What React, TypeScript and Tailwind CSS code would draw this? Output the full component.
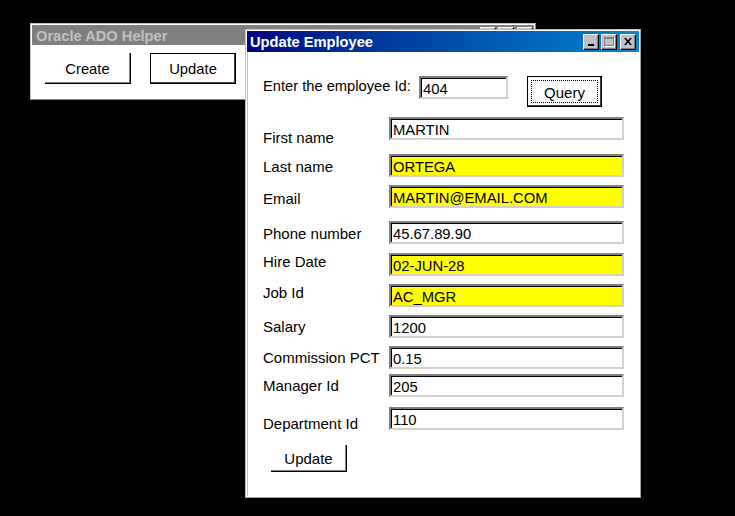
import React from "react";

type Row = {
  label: string;
  value: string;
  yellow: boolean;
  rowMt: string;
  labelMt: string;
};

const rows: Row[] = [
  { label: "First name", value: "MARTIN", yellow: false, rowMt: "mt-[10px]", labelMt: "mt-[12px]" },
  { label: "Last name", value: "ORTEGA", yellow: true, rowMt: "mt-[14px]", labelMt: "mt-[4px]" },
  { label: "Email", value: "MARTIN@EMAIL.COM", yellow: true, rowMt: "mt-[8px]", labelMt: "mt-[5px]" },
  { label: "Phone number", value: "45.67.89.90", yellow: false, rowMt: "mt-[13px]", labelMt: "mt-[4px]" },
  { label: "Hire Date", value: "02-JUN-28", yellow: true, rowMt: "mt-[9px]", labelMt: "mt-[0px]" },
  { label: "Job Id", value: "AC_MGR", yellow: true, rowMt: "mt-[8px]", labelMt: "mt-[0px]" },
  { label: "Salary", value: "1200", yellow: false, rowMt: "mt-[8px]", labelMt: "mt-[3px]" },
  { label: "Commission PCT", value: "0.15", yellow: false, rowMt: "mt-[8px]", labelMt: "mt-[3px]" },
  { label: "Manager Id", value: "205", yellow: false, rowMt: "mt-[5px]", labelMt: "mt-[3px]" },
  { label: "Department Id", value: "110", yellow: false, rowMt: "mt-[10px]", labelMt: "mt-[8px]" },
];

function TitleButtons() {
  const base =
    "w-[16px] h-[16px] bg-[#c0c0c0] border border-t-white border-l-white border-b-black border-r-black shadow-[inset_-1px_-1px_0_#808080] flex";
  return (
    <div className="flex items-center">
      <div className={base + " items-end justify-center pb-[3px]"}>
        <div className="w-[6px] h-[2px] bg-black mr-[1px]" />
      </div>
      <div className={base + " items-center justify-center ml-[2px]"}>
        <div className="w-[10px] h-[9px] border border-[#808080] border-t-2 shadow-[1px_1px_0_#ffffff]" />
      </div>
      <div className={base + " items-center justify-center ml-[3px]"}>
        <svg width="8" height="7" viewBox="0 0 8 7">
          <path d="M0 0h2l2 2.2L6 0h2L5.1 3.5 8 7H6L4 4.8 2 7H0l2.9-3.5z" fill="black" />
        </svg>
      </div>
    </div>
  );
}

function Field({ value, yellow, w }: { value: string; yellow: boolean; w: string }) {
  return (
    <div
      className={
        (yellow ? "bg-[#ffff00] " : "bg-white ") +
        w +
        " h-[23px] border-2 border-t-[#808080] border-l-[#808080] border-b-[#d4d0c8] border-r-[#d4d0c8] shadow-[inset_1px_1px_0_#000000] pl-[2px] pt-[2px] text-[14.8px] leading-[18px] text-black whitespace-nowrap overflow-hidden"
      }
    >
      {value}
    </div>
  );
}

export default function App() {
  return (
    <div className="relative w-[735px] h-[516px] bg-black overflow-hidden font-['Liberation_Sans',Arial,sans-serif]">
      {/* Background window */}
      <div className="absolute left-[30px] top-[23px] w-[506px] h-[77px] bg-white border border-[#c0c0c0] border-b-[#808080] border-r-[#808080] p-[1px] flex flex-col">
        <div className="h-[20px] bg-[#808080] flex items-center justify-between pl-[4px] pr-[1px]">
          <span className="text-[14.67px] font-bold text-[#c0c0c0] leading-none pt-[2px]">Oracle ADO Helper</span>
          <TitleButtons />
        </div>
        <div className="flex pl-[13px] pt-[8px] gap-[19px]">
          <div className="w-[86px] h-[31px] bg-white border-b border-r border-black shadow-[inset_-1px_-1px_0_#808080] flex items-center justify-center pt-[2px] text-[14.8px] text-black">
            Create
          </div>
          <div className="w-[86px] h-[31px] bg-white border border-black shadow-[inset_-1px_-1px_0_#404040] flex items-center justify-center pt-[2px] text-[14.8px] text-black">
            Update
          </div>
        </div>
      </div>

      {/* Update Employee window */}
      <div className="absolute left-[245px] top-[29px] w-[396px] h-[469px] bg-white border border-[#c0c0c0] border-b-[#a0a0a0] border-r-[#a0a0a0] p-[1px] flex flex-col">
        <div className="h-[21px] bg-gradient-to-r from-[#000080] to-[#1084d0] flex items-center justify-between pl-[3px] pr-[3px]">
          <span className="text-[14.67px] font-bold text-white leading-none pt-[2px]">Update Employee</span>
          <TitleButtons />
        </div>
        <div className="flex-1 border-l border-[#c0c0c0] mt-[1px] pl-[15px] pt-[23px] flex flex-col text-[15px] text-black">
          {/* Query row */}
          <div className="flex items-start h-[31px]">
            <div className="w-[156px] mt-[2px] leading-[17px] text-[14.7px]">Enter the employee Id:</div>
            <Field value="404" yellow={false} w="w-[89px]" />
            <div className="ml-[19px] w-[75px] h-[31px] bg-white border border-black shadow-[inset_-1px_-1px_0_#404040] p-[3px] flex">
              <div className="flex-1 border border-dotted border-black flex items-center justify-center pt-[3px]">
                Query
              </div>
            </div>
          </div>

          {rows.map((r) => (
            <div key={r.label} className={"flex items-start h-[23px] " + r.rowMt}>
              <div className={"w-[126px] leading-[17px] whitespace-nowrap " + r.labelMt}>{r.label}</div>
              <Field value={r.value} yellow={r.yellow} w="w-[235px]" />
            </div>
          ))}

          <div className="mt-[15px] ml-[8px] w-[76px] h-[27px] bg-white border-b border-r border-black shadow-[inset_-1px_-1px_0_#808080] flex items-center justify-center pt-[2px]">
            Update
          </div>
        </div>
      </div>
    </div>
  );
}
